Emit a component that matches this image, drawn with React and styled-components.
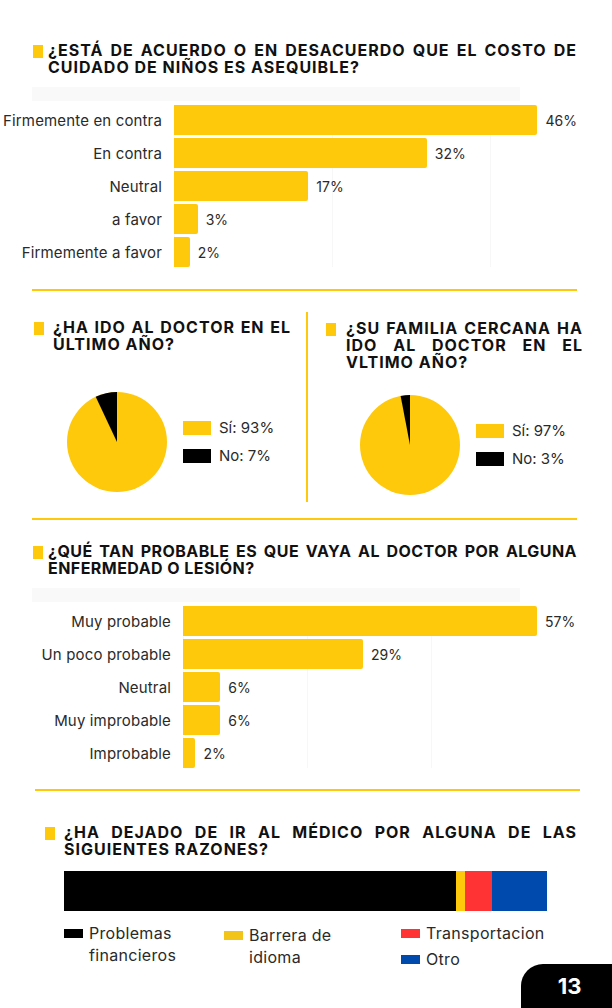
import React from "react";
import styled, { createGlobalStyle } from "styled-components";

const YELLOW = "#fec80b";

const GlobalStyle = createGlobalStyle`
  * { box-sizing: border-box; }
  body {
    margin: 0;
    background: #ffffff;
    font-family: "Inter", "Liberation Sans", sans-serif;
    color: #1c1c1c;
  }
`;

const Page = styled.div`
  position: relative;
  width: 612px;
  height: 1008px;
  padding-top: 42px;
  overflow: hidden;
  background: #fff;
`;

const Heading = styled.div`
  display: flex;
  align-items: flex-start;
  gap: ${(p) => p.$gap || 5}px;
  margin: ${(p) => p.$top || 0}px 0 0 ${(p) => p.$indent || 0}px;
`;

const Marker = styled.span`
  flex: none;
  width: 10px;
  height: 13px;
  margin-top: 3px;
  background: ${YELLOW};
`;

// one block of text; the width is picked so the lines break where the print does
const HeadingText = styled.h2`
  margin: 0;
  width: ${(p) => p.$width}px;
  font-size: 16px;
  font-weight: 700;
  letter-spacing: ${(p) => p.$tracking ?? 1}px;
  line-height: 17px;
  color: #111;
  text-transform: uppercase;
  text-align: justify;
`;

const Divider = styled.div`
  height: 2px;
  margin: ${(p) => p.$top || 0}px 0 0 ${(p) => p.$left || 32}px;
  width: ${(p) => p.$width || 545}px;
  background: ${YELLOW};
`;

const Band = styled.div`
  width: 488px;
  height: 14px;
  margin: 11px 0 4px 32px;
  background: #f9f9f9;
`;

const Rows = styled.div`
  display: flex;
  flex-direction: column;
  gap: 3px;
  background-image: repeating-linear-gradient(
    to right,
    #f7f7f7 0 1px,
    transparent 1px ${(p) => p.$grid}px
  );
  background-position: ${(p) => p.$start}px 0;
  background-size: ${(p) => 520 - p.$start}px 100%;
  background-repeat: no-repeat;
`;

const Row = styled.div`
  display: grid;
  grid-template-columns: ${(p) => p.$labelWidth}px 1fr;
  column-gap: 12px;
  align-items: center;
  height: 30px;
`;

const RowLabel = styled.div`
  text-align: right;
  font-size: 15px;
  letter-spacing: 0.15px;
  color: #2a2a2a;
  white-space: nowrap;
`;

const Track = styled.div`
  display: flex;
  align-items: center;
  height: 100%;
`;

const Bar = styled.div`
  height: 100%;
  background: ${YELLOW};
  border-radius: 0 2px 2px 0;
`;

const Value = styled.span`
  margin-left: 8px;
  font-size: 14px;
  color: #2a2a2a;
`;

const Split = styled.div`
  display: grid;
  grid-template-columns: 306px 2px 1fr;
`;

const Column = styled.div`
  padding: ${(p) => p.$top}px 0 ${(p) => p.$bottom || 0}px ${(p) => p.$left}px;
`;

const VRule = styled.div`
  margin: 21px 0 16px;
  background: ${YELLOW};
`;

const PieRow = styled.div`
  display: flex;
  align-items: center;
  gap: 16px;
  margin: ${(p) => p.$top}px 0 0 ${(p) => p.$left}px;
`;

const PieLegend = styled.div`
  display: flex;
  flex-direction: column;
  gap: 8px;
`;

const PieLegendItem = styled.div`
  display: flex;
  align-items: center;
  gap: 8px;
  font-size: 15px;
  line-height: 20px;
  color: #2a2a2a;
`;

const PieSwatch = styled.span`
  width: 28px;
  height: 14px;
  background: ${(p) => p.$color};
`;

const StackTrack = styled.div`
  display: flex;
  width: 483px;
  height: 40px;
  margin: 13px 0 0 64px;
`;

const StackPart = styled.div`
  flex: ${(p) => p.$share};
  background: ${(p) => p.$color};
`;

const KeyGrid = styled.div`
  display: grid;
  grid-template-columns: 160px 177px auto;
  margin: 11px 0 0 64px;
`;

const KeyColumn = styled.div`
  display: flex;
  flex-direction: column;
  gap: 4px;
  padding-top: ${(p) => p.$shift || 0}px;
`;

const KeyItem = styled.div`
  display: flex;
  align-items: flex-start;
  gap: 6px;
  font-size: 16px;
  letter-spacing: 0.3px;
  line-height: 22px;
  color: #2a2a2a;
`;

const KeySwatch = styled.span`
  flex: none;
  width: 19px;
  height: 9px;
  margin-top: 7px;
  background: ${(p) => p.$color};
`;

const PageTab = styled.div`
  position: absolute;
  right: 0;
  bottom: 0;
  width: 91px;
  height: 44px;
  display: flex;
  align-items: center;
  justify-content: center;
  padding-left: 6px;
  background: #000;
  border-top-left-radius: 22px;
  color: #fff;
  font-size: 22px;
  font-weight: 700;
`;

const costData = [
  { label: "Firmemente en contra", pct: 46 },
  { label: "En contra", pct: 32 },
  { label: "Neutral", pct: 17 },
  { label: "a favor", pct: 3 },
  { label: "Firmemente a favor", pct: 2 },
];

const doctorData = [
  { label: "Muy probable", pct: 57 },
  { label: "Un poco probable", pct: 29 },
  { label: "Neutral", pct: 6 },
  { label: "Muy improbable", pct: 6 },
  { label: "Improbable", pct: 2 },
];

const reasons = [
  { label: "Problemas financieros", color: "#000000", share: 392 },
  { label: "Barrera de idioma", color: "#fec80b", share: 9 },
  { label: "Transportacion", color: "#ff3333", share: 27 },
  { label: "Otro", color: "#004aad", share: 55 },
];

function Title({ children, width, indent, gap, top, tracking }) {
  return (
    <Heading $indent={indent} $gap={gap} $top={top}>
      <Marker />
      <HeadingText $width={width} $tracking={tracking}>
        {children}
      </HeadingText>
    </Heading>
  );
}

function BarChart({ data, scale, labelWidth }) {
  const start = labelWidth + 12;
  return (
    <>
      <Band />
      <Rows $grid={scale * 20} $start={start}>
        {data.map((d) => (
          <Row key={d.label} $labelWidth={labelWidth}>
            <RowLabel>{d.label}</RowLabel>
            <Track>
              <Bar style={{ width: d.pct * scale }} />
              <Value>{d.pct}%</Value>
            </Track>
          </Row>
        ))}
      </Rows>
    </>
  );
}

function Pie({ no }) {
  const a = (no / 100) * Math.PI * 2;
  const x = 50 - 50 * Math.sin(a);
  const y = 50 - 50 * Math.cos(a);
  return (
    <svg width="100" height="100" viewBox="0 0 100 100">
      <circle cx="50" cy="50" r="50" fill={YELLOW} />
      <path d={`M50 50 L50 0 A50 50 0 0 0 ${x} ${y} Z`} fill="#000" />
    </svg>
  );
}

function PieBlock({ yes, no, top, left }) {
  return (
    <PieRow $top={top} $left={left}>
      <Pie no={no} />
      <PieLegend>
        <PieLegendItem>
          <PieSwatch $color={YELLOW} />
          Sí: {yes}%
        </PieLegendItem>
        <PieLegendItem>
          <PieSwatch $color="#000" />
          No: {no}%
        </PieLegendItem>
      </PieLegend>
    </PieRow>
  );
}

export default function App() {
  return (
    <Page>
      <GlobalStyle />

      <Title indent={33} width={529}>
        ¿Está de acuerdo o en desacuerdo que el costo de cuidado de niños es
        asequible?
      </Title>
      <BarChart data={costData} scale={7.9} labelWidth={162} />
      <Divider $top={22} />

      <Split>
        <Column $top={28} $left={34}>
          <Title gap={9} width={238}>
            ¿Ha ido al doctor en el último año?
          </Title>
          <PieBlock yes={93} no={7} top={39} left={33} />
        </Column>
        <VRule />
        <Column $top={29} $left={18} $bottom={23}>
          <Title gap={10} width={237}>
            ¿Su familia cercana ha ido al doctor en el vltimo año?
          </Title>
          <PieBlock yes={97} no={3} top={24} left={34} />
        </Column>
      </Split>

      <Divider />

      <Title top={23} indent={33} width={529} tracking={0.45}>
        ¿Qué tan probable es que vaya al doctor por alguna enfermedad o lesión?
      </Title>
      <BarChart data={doctorData} scale={6.21} labelWidth={171} />
      <Divider $top={21} $left={35} />

      <Title top={33} indent={45} gap={9} width={513}>
        ¿Ha dejado de ir al médico por alguna de las siguientes razones?
      </Title>
      <StackTrack>
        {reasons.map((r) => (
          <StackPart key={r.label} $share={r.share} $color={r.color} />
        ))}
      </StackTrack>
      <KeyGrid>
        <KeyColumn>
          <KeyItem>
            <KeySwatch $color="#000" />
            <span>
              Problemas
              <br />
              financieros
            </span>
          </KeyItem>
        </KeyColumn>
        <KeyColumn $shift={2}>
          <KeyItem>
            <KeySwatch $color="#f2c318" />
            <span>
              Barrera de
              <br />
              idioma
            </span>
          </KeyItem>
        </KeyColumn>
        <KeyColumn>
          <KeyItem>
            <KeySwatch $color="#ff3333" />
            Transportacion
          </KeyItem>
          <KeyItem>
            <KeySwatch $color="#004aad" />
            Otro
          </KeyItem>
        </KeyColumn>
      </KeyGrid>

      <PageTab>13</PageTab>
    </Page>
  );
}
